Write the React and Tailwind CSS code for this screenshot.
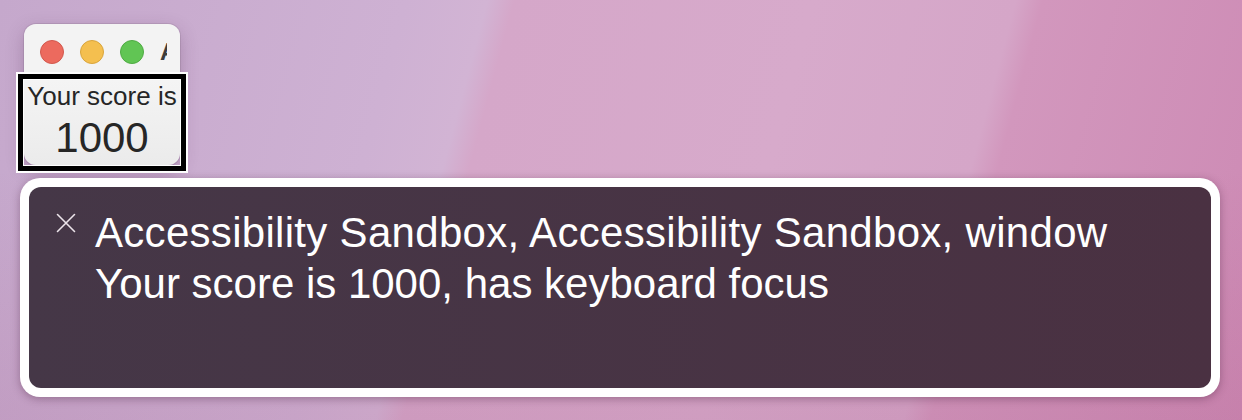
const FONT = "font-['Liberation_Sans','Helvetica',sans-serif]";

function TrafficLights() {
  return (
    <div className="flex gap-[16px]">
      <span className="block size-[24px] rounded-full bg-[#ec6a5e] border border-[#d2584d]" />
      <span className="block size-[24px] rounded-full bg-[#f4bf4f] border border-[#d9a53c]" />
      <span className="block size-[24px] rounded-full bg-[#61c554] border border-[#4fab43]" />
    </div>
  );
}

function CloseMark() {
  return (
    <svg width="20" height="20" viewBox="0 0 20 20" className="mt-[6px] shrink-0" fill="none" stroke="#ece4ea" strokeWidth="1.6" strokeLinecap="round">
      <path d="M1.5 1.5 L18.5 18.5 M18.5 1.5 L1.5 18.5" />
    </svg>
  );
}

function ScoreWindow() {
  return (
    <div className={`ml-[24px] mt-[24px] w-[156px] rounded-[12px] shadow-[0_6px_18px_rgba(80,40,80,0.28),0_0_0_1px_rgba(0,0,0,0.08)] ${FONT}`}>
      <div className="flex h-[56px] items-start rounded-t-[12px] bg-[#f3f3f3] pl-[16px] pt-[16px]">
        <TrafficLights />
        {/* title is squeezed down to its first letter */}
        <div className="ml-[16px] mt-[-3px] w-[7px] overflow-hidden whitespace-nowrap text-[24px] font-semibold leading-[30px] text-[#3c3c3c]">
          Accessibility Sandbox
        </div>
      </div>
      {/* focused element: white / black / white focus ring */}
      <div className="shadow-[0_0_0_1px_#ffffff,0_0_0_6px_#000000,0_0_0_8px_#ffffff]">
        <div className="h-[85px] rounded-b-[12px] bg-[linear-gradient(to_bottom,#f4f4f4,#ebebeb)] pt-[1px] text-center text-[#262626]">
          <div className="text-[26px] leading-[30px]">Your score is</div>
          <div className="mt-[4px] text-[42px] leading-[46px]">1000</div>
        </div>
      </div>
    </div>
  );
}

function CaptionPanel() {
  return (
    <div className={`ml-[20px] mt-[13px] h-[219px] w-[1200px] rounded-[20px] bg-white p-[9px] shadow-[0_2px_8px_rgba(60,20,50,0.35)] ${FONT}`}>
      <div className="flex h-full rounded-[12px] bg-[linear-gradient(to_right,#453747,#4a3142)] pl-[27px] pt-[20px]">
        <CloseMark />
        <div className="ml-[19px] text-[42px] leading-[51px] text-white">
          <div className="tracking-[0.3px]">Accessibility Sandbox, Accessibility Sandbox, window</div>
          <div>Your score is 1000, has keyboard focus</div>
        </div>
      </div>
    </div>
  );
}

export default function App() {
  return (
    <div className="h-[420px] w-[1242px] overflow-hidden bg-[linear-gradient(to_bottom,rgba(0,0,0,0)_40%,rgba(150,60,110,0.12)_100%),linear-gradient(105deg,#c5a8cc_0%,#ceb1d3_30%,#d2b4d4_36%,#d5a7c9_38%,#d7aacb_60%,#d5a6c8_75%,#d297bd_77%,#cd8ab4_100%)]">
      <ScoreWindow />
      <CaptionPanel />
    </div>
  );
}
